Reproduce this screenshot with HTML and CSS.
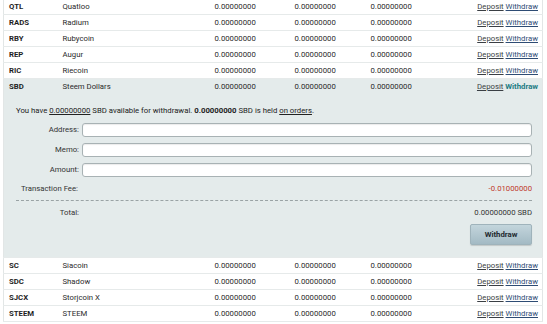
FILE: index.html
```html
<!DOCTYPE html>
<html>
<head>
<meta charset="utf-8">
<link rel="stylesheet" href="styles.css">
</head>
<body>
<div class="wrap">
<table class="bal">
  <colgroup>
    <col class="c-sym"><col class="c-name"><col class="c-n1"><col class="c-n2"><col class="c-n3"><col class="c-act">
  </colgroup>
  <tbody>
    <tr><td class="sym">QTL</td><td>Quatloo</td><td>0.00000000</td><td>0.00000000</td><td>0.00000000</td><td class="act"><a class="dep">Deposit</a> <a class="wd">Withdraw</a></td></tr>
    <tr><td class="sym">RADS</td><td>Radium</td><td>0.00000000</td><td>0.00000000</td><td>0.00000000</td><td class="act"><a class="dep">Deposit</a> <a class="wd">Withdraw</a></td></tr>
    <tr><td class="sym">RBY</td><td>Rubycoin</td><td>0.00000000</td><td>0.00000000</td><td>0.00000000</td><td class="act"><a class="dep">Deposit</a> <a class="wd">Withdraw</a></td></tr>
    <tr><td class="sym">REP</td><td>Augur</td><td>0.00000000</td><td>0.00000000</td><td>0.00000000</td><td class="act"><a class="dep">Deposit</a> <a class="wd">Withdraw</a></td></tr>
    <tr><td class="sym">RIC</td><td>Riecoin</td><td>0.00000000</td><td>0.00000000</td><td>0.00000000</td><td class="act"><a class="dep">Deposit</a> <a class="wd">Withdraw</a></td></tr>
    <tr class="sel"><td class="sym">SBD</td><td>Steem Dollars</td><td>0.00000000</td><td>0.00000000</td><td>0.00000000</td><td class="act"><a class="dep">Deposit</a> <a class="wd active">Withdraw</a></td></tr>
    <tr class="panel-row"><td colspan="6">
      <div class="panel">
        <p class="avail">You have <span class="u">0.00000000</span> SBD available for withdrawal. <b>0.00000000</b> SBD is held <span class="u">on orders</span>.</p>
        <div class="form">
          <label>Address:</label><div class="inp"></div>
          <label>Memo:</label><div class="inp"></div>
          <label>Amount:</label><div class="inp"></div>
        </div>
        <div class="fee"><span>Transaction Fee:</span><span class="red">-0.01000000</span></div>
        <div class="dash"></div>
        <div class="total"><span class="tl">Total:</span><span>0.00000000 SBD</span></div>
        <div class="btnrow"><button class="btn">Withdraw</button></div>
      </div>
    </td></tr>
    <tr><td class="sym">SC</td><td>Siacoin</td><td>0.00000000</td><td>0.00000000</td><td>0.00000000</td><td class="act"><a class="dep">Deposit</a> <a class="wd">Withdraw</a></td></tr>
    <tr><td class="sym">SDC</td><td>Shadow</td><td>0.00000000</td><td>0.00000000</td><td>0.00000000</td><td class="act"><a class="dep">Deposit</a> <a class="wd">Withdraw</a></td></tr>
    <tr><td class="sym">SJCX</td><td>Storjcoin X</td><td>0.00000000</td><td>0.00000000</td><td>0.00000000</td><td class="act"><a class="dep">Deposit</a> <a class="wd">Withdraw</a></td></tr>
    <tr><td class="sym">STEEM</td><td>STEEM</td><td>0.00000000</td><td>0.00000000</td><td>0.00000000</td><td class="act"><a class="dep">Deposit</a> <a class="wd">Withdraw</a></td></tr>
  </tbody>
</table>
</div>
</body>
</html>
```
FILE: styles.css
```css
html, body {
  margin: 0;
  padding: 0;
  background: #fff;
  overflow: hidden;
}
body {
  font-family: Roboto, "Liberation Sans", sans-serif;
  font-size: 7.75px;
  color: #2a2a2a;
}
.wrap {
  margin: -1px 0 0 3px;
  width: 540px;
}
.bal {
  width: 540px;
  border-collapse: collapse;
  table-layout: fixed;
  border-left: 1px solid #e2e6e6;
  border-right: 1px solid #e2e6e6;
}
.c-sym { width: 54px; }
.c-name { width: 150px; }
.c-n1 { width: 80px; }
.c-n2 { width: 78px; }
.c-n3 { width: 80px; }
.bal td {
  height: 15px;
  padding: 0 0 0 5px;
  border-bottom: 1px solid #e6eaea;
  white-space: nowrap;
  line-height: 15px;
}
.bal td:nth-child(3) { padding-left: 7px; }
.bal td:nth-child(4) { padding-left: 7px; }
.bal td:nth-child(5) { padding-left: 5px; }
.sym { font-weight: bold; color: #1e1e1e; }
.act { text-align: right; padding-right: 4px !important; }
.dep { color: #3a3f44; text-decoration: underline; }
.wd { color: #2e4c74; text-decoration: underline; }
.wd.active { color: #1d7c84; font-weight: bold; text-decoration: none; }
.sel td { background: #e4ebeb; border-bottom: none; }
.panel-row td {
  padding: 0 !important;
  height: auto;
  background: #e4ebeb;
  line-height: normal;
}
.panel {
  padding: 12px 10px 12px 12px;
}
.avail {
  margin: 0;
  line-height: 10px;
  color: #222;
}
.u { text-decoration: underline; }
.form {
  margin-top: 7px;
  display: grid;
  grid-template-columns: 63px 1fr;
  column-gap: 3px;
  row-gap: 6px;
}
.form label {
  text-align: right;
  line-height: 14px;
  color: #333;
}
.inp {
  height: 12px;
  background: #fff;
  border: 1px solid #a8b2b4;
  border-radius: 3px;
  box-shadow: inset 0 1px 1px rgba(0,0,0,0.08);
}
.fee {
  margin-top: 7px;
  display: flex;
  justify-content: space-between;
  line-height: 10px;
  padding-left: 5px;
  color: #333;
}
.red { color: #c0392b; }
.dash {
  margin-top: 6px;
  border-top: 1px dashed #9aa3a5;
}
.total {
  margin-top: 7px;
  display: flex;
  justify-content: space-between;
  line-height: 10px;
  color: #333;
}
.tl { width: 63px; text-align: right; }
.btnrow {
  margin-top: 6px;
  display: flex;
  justify-content: flex-end;
}
.btn {
  width: 62px;
  height: 21px;
  border: 1px solid #9fb3bb;
  border-radius: 2px;
  background: linear-gradient(#c3d5dc, #a3bac4);
  font-family: Roboto, "Liberation Sans", sans-serif;
  font-size: 7.75px;
  font-weight: bold;
  color: #1f2a30;
  padding: 0;
  box-shadow: 0 1px 1px rgba(0,0,0,0.15);
}
```
